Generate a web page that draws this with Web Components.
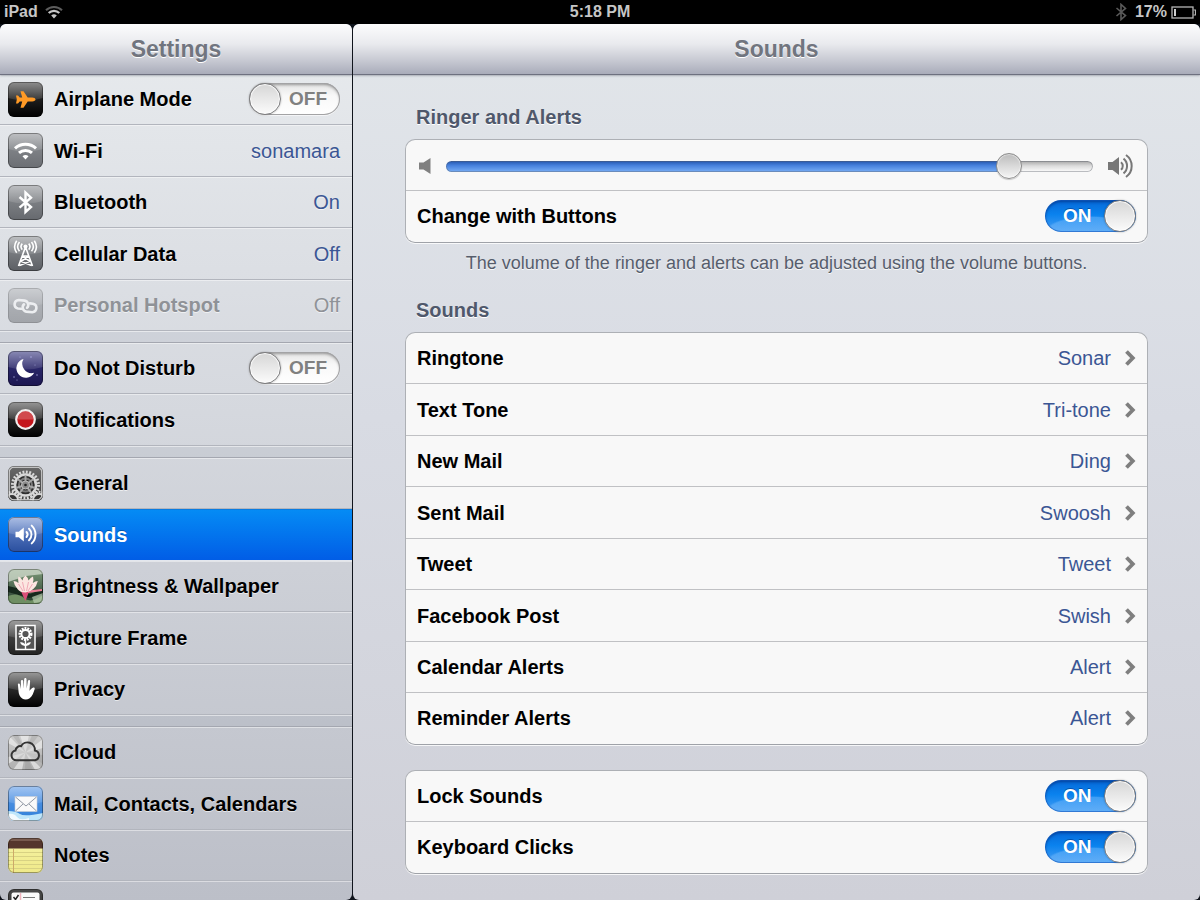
<!DOCTYPE html>
<html lang="en">
<head>
<meta charset="utf-8">
<title>Settings</title>
<style>
    html, body {
        height: 100%;
        margin: 0;
        overflow: hidden;
        background: #000;
    }
    body {
        font-family: "Liberation Sans", Arial, Helvetica, sans-serif;
        font-size: 20px;
    }
</style>
</head>
<body>
<settings-app>
    <status-bar slot="status"></status-bar>

    <settings-panel slot="sidebar" class="sidebar" heading="Settings">
        <plain-group>
            <switch-row icon="airplane">Airplane Mode</switch-row>
            <link-row icon="wifi" value="sonamara">Wi-Fi</link-row>
            <link-row icon="bluetooth" value="On">Bluetooth</link-row>
            <link-row icon="cellular" value="Off">Cellular Data</link-row>
            <link-row icon="hotspot" value="Off" disabled>Personal Hotspot</link-row>
        </plain-group>
        <plain-group>
            <switch-row icon="moon">Do Not Disturb</switch-row>
            <link-row icon="notifications">Notifications</link-row>
        </plain-group>
        <plain-group>
            <link-row icon="general">General</link-row>
            <link-row icon="sounds" selected>Sounds</link-row>
            <link-row icon="wallpaper">Brightness &amp; Wallpaper</link-row>
            <link-row icon="frame">Picture Frame</link-row>
            <link-row icon="privacy">Privacy</link-row>
        </plain-group>
        <plain-group>
            <link-row icon="icloud">iCloud</link-row>
            <link-row icon="mail">Mail, Contacts, Calendars</link-row>
            <link-row icon="notes">Notes</link-row>
            <link-row icon="reminders" name="Reminders"></link-row>
        </plain-group>
    </settings-panel>

    <settings-panel slot="detail" class="detail" heading="Sounds">
        <card-group heading="Ringer and Alerts" note="The volume of the ringer and alerts can be adjusted using the volume buttons.">
            <volume-row></volume-row>
            <switch-row on>Change with Buttons</switch-row>
        </card-group>
        <card-group heading="Sounds">
            <link-row value="Sonar" chevron>Ringtone</link-row>
            <link-row value="Tri-tone" chevron>Text Tone</link-row>
            <link-row value="Ding" chevron>New Mail</link-row>
            <link-row value="Swoosh" chevron>Sent Mail</link-row>
            <link-row value="Tweet" chevron>Tweet</link-row>
            <link-row value="Swish" chevron>Facebook Post</link-row>
            <link-row value="Alert" chevron>Calendar Alerts</link-row>
            <link-row value="Alert" chevron>Reminder Alerts</link-row>
        </card-group>
        <card-group>
            <switch-row on>Lock Sounds</switch-row>
            <switch-row on>Keyboard Clicks</switch-row>
        </card-group>
    </settings-panel>
</settings-app>

<script>
/* Page frame: status bar on top, sidebar and detail pane below */
class SettingsApp extends HTMLElement {
    connectedCallback() {
        this.attachShadow({ mode: "open" });
        this.shadowRoot.innerHTML = `
            <style>
                :host {
                    display: grid;
                    grid-template-rows: 24px minmax(0, 1fr);
                    height: 100vh;
                }
                main {
                    display: grid;
                    grid-template-columns: 352px minmax(0, 1fr);
                    gap: 1px;
                    min-height: 0;
                    background: #10141c;
                }
            </style>
            <slot name="status"></slot>
            <main>
                <slot name="sidebar"></slot>
                <slot name="detail"></slot>
            </main>
        `;
    }
}
customElements.define("settings-app", SettingsApp);


class StatusBar extends HTMLElement {
    connectedCallback() {
        this.attachShadow({ mode: "open" });
        this.shadowRoot.innerHTML = `
            <style>
                :host {
                    display: grid;
                    grid-template-columns: 1fr auto 1fr;
                    align-items: center;
                    padding: 0 4px;
                    background: #000;
                    color: #c6c6c6;
                    font-size: 16px;
                    font-weight: bold;
                }
                div {
                    display: flex;
                    align-items: center;
                    gap: 7px;
                }
                .right {
                    justify-content: flex-end;
                    gap: 4px;
                }
                .bt {
                    margin-right: 4px;
                }
                svg {
                    display: block;
                }
            </style>
            <div>
                <span>iPad</span>
                <svg width="18" height="14" viewBox="0 0 18 14" fill="none" stroke-width="2">
                    <path d="M1 5.200a11.300 11.300 0 0 1 16 0" stroke="#5c5c5c"/>
                    <path d="M3.700 8a7.500 7.500 0 0 1 10.600 0" stroke="#c6c6c6" stroke-width="2.300"/>
                    <path d="M6.200 10.600a4 4 0 0 1 5.600 0L9 13.600z" fill="#c6c6c6"/>
                </svg>
            </div>
            <span>5:18 PM</span>
            <div class="right">
                <svg class="bt" width="12" height="18" viewBox="0 0 12 18" fill="none" stroke="#5a5a5a" stroke-width="1.600">
                    <path d="M1.500 5l9 7.600L6 16.600V1.400l4.500 4L1.500 13"/>
                </svg>
                <span>17%</span>
                <svg width="25" height="13" viewBox="0 0 25 13">
                    <rect x="1" y="1" width="21" height="11" fill="none" stroke="#b4b4b4" stroke-width="1.300"/>
                    <rect x="3" y="3" width="2" height="7" fill="#d0d0d0"/>
                    <path d="M22.500 4h2v5h-2" fill="none" stroke="#b4b4b4" stroke-width="1.200"/>
                </svg>
            </div>
        `;
    }
}
customElements.define("status-bar", StatusBar);


/* A column with a glossy title bar; used for both sides */
class SettingsPanel extends HTMLElement {
    connectedCallback() {
        this.attachShadow({ mode: "open" });
        this.shadowRoot.innerHTML = `
            <style>
                :host {
                    display: flex;
                    flex-direction: column;
                    min-width: 0;
                    min-height: 0;
                    overflow: hidden;
                    border-radius: 6px;
                }
                :host(.sidebar) {
                    background: linear-gradient(#e8ebee, #d6d9df 42%, #bcbfc8);
                }
                :host(.detail) {
                    background: linear-gradient(#e2e6ea, #d8dbe3 45%, #cfd0d8);
                }
                header {
                    flex: none;
                    position: relative;
                    height: 50px;
                    background: linear-gradient(#fcfcfd, #e9eaee 40%, #c8cad3 72%, #a9acba);
                    border-radius: 6px 6px 0 0;
                    box-shadow: 0 1px #6e7180, 0 2px 2px rgba(90, 95, 110, .4);
                }
                h1 {
                    margin: 0;
                    font-size: 23px;
                    line-height: 50px;
                    text-align: center;
                    color: #71757f;
                    text-shadow: 0 1px #fff;
                }
                .content {
                    flex: 1;
                    display: flex;
                    flex-direction: column;
                    min-height: 0;
                    overflow: hidden;
                }
                :host(.detail) .content {
                    padding: 31px 52px 0;
                }
                :host(.sidebar) .content {
                    --label-shadow: 0 1px rgba(255, 255, 255, .6);
                    gap: 12px;
                }
            </style>
            <header><h1></h1></header>
            <div class="content"><slot></slot></div>
        `;
        this.shadowRoot.querySelector("h1").textContent = this.getAttribute("heading");
    }
}
customElements.define("settings-panel", SettingsPanel);


/* Full-width rows of the sidebar */
class PlainGroup extends HTMLElement {
    connectedCallback() {
        this.attachShadow({ mode: "open" });
        this.shadowRoot.innerHTML = `
            <style>
                :host {
                    display: block;
                    flex: none;
                    --line: #b2b5bd;
                    --highlight: rgba(255, 255, 255, .45);
                    --pad-left: 8px;
                    --pad-right: 12px;
                    box-shadow: 0 -1px #a4a7b0, 0 1px rgba(255, 255, 255, .5), 0 12px rgba(120, 125, 145, .1);
                }
                ::slotted(:nth-child(even)) {
                    --row-height: 52px;
                }
            </style>
            <slot></slot>
        `;
    }
}
customElements.define("plain-group", PlainGroup);


/* Rounded white card with an optional heading and footnote */
class CardGroup extends HTMLElement {
    connectedCallback() {
        this.attachShadow({ mode: "open" });
        this.shadowRoot.innerHTML = `
            <style>
                :host {
                    display: block;
                    flex: none;
                    margin-bottom: 25px;
                    --line: #c0c1c4;
                    --highlight: transparent;
                    --pad-left: 11px;
                    --pad-right: 11px;
                }
                :host([note]) {
                    margin-bottom: 24px;
                }
                h2 {
                    margin: 0 0 10px;
                    padding-left: 11px;
                    font-size: 20px;
                    line-height: 24px;
                    color: #4f586b;
                    text-shadow: 0 1px #fff;
                }
                .card {
                    border: 1px solid #adb0b5;
                    border-bottom-color: #9fa2a8;
                    border-radius: 10px;
                    overflow: hidden;
                    background: #f8f8f8;
                    box-shadow: 0 1px rgba(255, 255, 255, .8);
                }
                ::slotted(:nth-child(even)) {
                    --row-height: 52px;
                }
                ::slotted(:last-child) {
                    --row-height: 51px;
                    --line: transparent;
                }
                p {
                    margin: 9px 0 0;
                    font-size: 18px;
                    line-height: 22px;
                    text-align: center;
                    color: #565d6c;
                    text-shadow: 0 1px rgba(255, 255, 255, .8);
                }
                [hidden] {
                    display: none;
                }
            </style>
            <h2></h2>
            <div class="card"><slot></slot></div>
            <p></p>
        `;
        this._fill("h2", "heading");
        this._fill("p", "note");
    }

    _fill(selector, name) {
        const node = this.shadowRoot.querySelector(selector);
        node.textContent = this.getAttribute(name) || "";
        node.hidden = !this.hasAttribute(name);
    }
}
customElements.define("card-group", CardGroup);


/* Styles that every row has */
const rowStyle = `
    :host {
        display: block;
    }
    .row {
        box-sizing: border-box;
        display: flex;
        align-items: center;
        height: var(--row-height, 51px);
        padding: 0 var(--pad-right) 0 var(--pad-left);
        border-bottom: 1px solid var(--line);
        box-shadow: inset 0 1px var(--highlight);
        color: #000;
        text-decoration: none;
    }
    .text {
        flex: 1;
        font-weight: bold;
        line-height: 24px;
        text-shadow: var(--label-shadow, none);
        white-space: nowrap;
    }
    app-icon {
        margin-right: 11px;
    }
`;

class LinkRow extends HTMLElement {
    connectedCallback() {
        const icon = this.getAttribute("icon");
        const value = this.getAttribute("value");
        const name = this.getAttribute("name");

        this.attachShadow({ mode: "open" });
        this.shadowRoot.innerHTML = `
            <style>
                ${rowStyle}
                .value {
                    line-height: 24px;
                    color: #3b5694;
                    text-shadow: var(--label-shadow, none);
                }
                svg {
                    margin-left: 13px;
                }
                :host([selected]) .row {
                    background: linear-gradient(#058cf5, #015de6);
                    border-color: #e3e7ee;
                    box-shadow: inset 0 1px #0a7be0;
                    color: #fff;
                }
                :host([selected]) .text {
                    text-shadow: 0 -1px rgba(0, 0, 0, .3);
                }
                :host([disabled]) .text,
                :host([disabled]) .value {
                    color: #8f9297;
                }
                :host([disabled]) app-icon {
                    opacity: .5;
                }
            </style>
            <a class="row" href="#" ${name ? `aria-label="${name}"` : ""}>
                ${icon ? `<app-icon name="${icon}"></app-icon>` : ""}
                <span class="text"><slot></slot></span>
                ${value ? `<span class="value">${value}</span>` : ""}
                ${this.hasAttribute("chevron") ? `
                    <svg width="12" height="18" viewBox="0 0 12 18" fill="none" stroke="#7f7f7f" stroke-width="3.800">
                        <path d="M2.500 2.500L8.800 9l-6.300 6.500"/>
                    </svg>` : ""}
            </a>
        `;
    }
}
customElements.define("link-row", LinkRow);


class SwitchRow extends HTMLElement {
    connectedCallback() {
        const icon = this.getAttribute("icon");

        this.attachShadow({ mode: "open" });
        this.shadowRoot.innerHTML = `
            <style>
                ${rowStyle}
                .switch {
                    display: grid;
                    align-items: center;
                    width: 91px;
                    height: 32px;
                }
                .switch > * {
                    grid-area: 1 / 1;
                }
                input {
                    appearance: none;
                    box-sizing: border-box;
                    display: flex;
                    width: 100%;
                    height: 100%;
                    margin: 0;
                    border-radius: 16px;
                    background: linear-gradient(#e4e4e4, #f8f8f8 40%, #fff);
                    box-shadow: inset 0 0 0 1px #a3a3a5, inset 0 2px 3px rgba(0, 0, 0, .35), 0 1px rgba(255, 255, 255, .6);
                }
                input::before {
                    content: "";
                    box-sizing: border-box;
                    width: 32px;
                    height: 32px;
                    border: 1px solid #7c7c7e;
                    border-radius: 50%;
                    background: linear-gradient(#d6d6d6, #fbfbfb);
                    box-shadow: inset 0 0 1px 1px #fff, 0 0 2px rgba(0, 0, 0, .3);
                }
                input:checked {
                    justify-content: flex-end;
                    background:
                        radial-gradient(ellipse 46px 16px at 50% 100%, rgba(130, 195, 255, .4) 92%, transparent),
                        linear-gradient(#0568d8, #0a82ee 45%, #4a9ff2);
                    box-shadow: inset 0 0 0 1px rgba(20, 90, 190, .6), inset 0 2px 3px rgba(0, 30, 100, .55);
                }
                .word {
                    padding-left: 40px;
                    font-size: 19px;
                    font-weight: bold;
                    line-height: 32px;
                    color: #808080;
                    pointer-events: none;
                }
                :checked + .word {
                    padding-left: 18px;
                    color: #fff;
                    text-shadow: 0 -1px rgba(0, 40, 110, .5);
                }
            </style>
            <label class="row">
                ${icon ? `<app-icon name="${icon}"></app-icon>` : ""}
                <span class="text"><slot></slot></span>
                <span class="switch">
                    <input type="checkbox" role="switch">
                    <span class="word"></span>
                </span>
            </label>
        `;

        this.input = this.shadowRoot.querySelector("input");
        this.input.checked = this.hasAttribute("on");
        this.input.addEventListener("change", () => this._update());
        this._update();
    }

    _update() {
        this.shadowRoot.querySelector(".word").textContent = this.input.checked ? "ON" : "OFF";
    }
}
customElements.define("switch-row", SwitchRow);


class VolumeRow extends HTMLElement {
    connectedCallback() {
        this.attachShadow({ mode: "open" });
        this.shadowRoot.innerHTML = `
            <style>
                ${rowStyle}
                .row {
                    gap: 14px;
                    padding: 2px 12px 0 13px;
                }
                svg {
                    flex: none;
                }
                input {
                    appearance: none;
                    flex: 1;
                    min-width: 0;
                    height: 28px;
                    margin: 0;
                    background: none;
                }
                input::-webkit-slider-runnable-track {
                    height: 11px;
                    border-radius: 6px;
                    background:
                        linear-gradient(#2456ac, #4680dc 40%, #79aef5) 0 0 / var(--level) 100% no-repeat,
                        linear-gradient(#a6a6a6, #dcdcdc 45%, #fdfdfd);
                    box-shadow: inset 0 0 0 1px rgba(90, 95, 105, .4);
                }
                input::-webkit-slider-thumb {
                    appearance: none;
                    box-sizing: border-box;
                    width: 26px;
                    height: 26px;
                    margin-top: -8px;
                    border: 1px solid #8c8c8c;
                    border-radius: 50%;
                    background: linear-gradient(#bcbcbc, #f6f6f6);
                    box-shadow: inset 0 0 1px 1px rgba(255, 255, 255, .5), 0 1px 1px rgba(0, 0, 0, .2);
                }
            </style>
            <div class="row">
                <svg width="13" height="18" viewBox="0 0 13 18" fill="#808080">
                    <path d="M0 5.500h4.500L11.500 1v16l-7-4.500H0z"/>
                </svg>
                <input type="range" min="0" max="200" value="177" aria-label="Ringer volume">
                <svg width="28" height="26" viewBox="0 0 28 26" fill="none" stroke="#777" stroke-width="2">
                    <path d="M1 9h4.500L12 4v18L5.500 17H1z" fill="#777" stroke="none"/>
                    <path d="M14 9.200a5 5 0 0 1 0 7.600M16.500 5.600a9.500 9.500 0 0 1 0 14.800M19 2a13.500 13.500 0 0 1 0 22"/>
                </svg>
            </div>
        `;

        this.input = this.shadowRoot.querySelector("input");
        this.input.addEventListener("input", () => this._update());
        this._update();
    }

    _update() {
        this.input.style.setProperty("--level", this.input.value / this.input.max * 100 + "%");
    }
}
customElements.define("volume-row", VolumeRow);


/*
 * Icons: each one has the two colours of its background gradient
 * and the drawing that goes on it, in a 35 x 35 box.
 * gloss: false leaves out the light upper half.
 */
const icons = {
    airplane: {
        from: "#3c3c3c", to: "#000",
        art: `<path fill="#ff9a26" d="M27.500 17.500c0 1.100-1.300 1.900-3.200 1.900h-4.600l-4.200 6.400h-3l1.700-6.400h-2.500L10 21.500H8l.8-4-.8-4h2l1.700 2.100h2.500l-1.700-6.400h3l4.200 6.400h4.600c1.900 0 3.200.8 3.200 1.900z"/>`
    },
    wifi: {
        from: "#8f9296", to: "#6b6e73",
        art: `<g fill="none" stroke="#fff" stroke-width="3">
                <path d="M7 15.300a15.500 15.500 0 0 1 21 0M11 19.900a9.700 9.700 0 0 1 13 0"/></g>
              <path fill="#fff" d="M14.500 23.200a5 5 0 0 1 6 0l-3 3.200z"/>`
    },
    bluetooth: {
        from: "#8f9296", to: "#66696e",
        art: `<path fill="none" stroke="#fff" stroke-width="2.400" d="M11.500 12l11.500 10-5.500 5V7.500l5.500 5.200-11.500 10"/>`
    },
    cellular: {
        from: "#8f9296", to: "#5c5f64",
        art: `<g fill="none" stroke="#fff" stroke-width="1.600">
                <path d="M17.500 11L10.500 30M17.500 11l7 19M14.500 20h6M13 25.500l7.500-5.500M22 25.500L14.500 20M11.500 29.500l10-4M23.500 29.500l-10-4"/>
                <path d="M14.300 7.600a4.500 4.500 0 0 0 0 6M20.700 7.600a4.500 4.500 0 0 1 0 6M11.500 6a7.500 7.500 0 0 0 0 9.300M23.500 6a7.500 7.500 0 0 1 0 9.300M8.700 4.700a10.500 10.500 0 0 0 0 12M26.300 4.700a10.500 10.500 0 0 1 0 12"/></g>
              <circle cx="17.500" cy="10.500" r="2" fill="#fff"/>`
    },
    hotspot: {
        from: "#8f9296", to: "#6b6e73",
        art: `<g fill="none" stroke="#fff" stroke-width="2.600" stroke-linecap="round">
                <path d="M13 20.800l-3-.3a4.300 4.300 0 0 1 .7-8.500l6 .6a4.300 4.300 0 0 1 2.300 7.300"/>
                <path d="M22 15.400l3 .3a4.300 4.300 0 0 1-.7 8.500l-6-.6a4.300 4.300 0 0 1-2.300-7.300"/></g>`
    },
    moon: {
        from: "#35357e", to: "#1c1650",
        art: `<path fill="#fff" d="M15.500 8a9.500 9.500 0 1 0 10.700 13.800A9.500 9.500 0 0 1 15.500 8z"/>
              <g fill="#a9a9e0"><circle cx="23" cy="6" r=".8"/><circle cx="12" cy="6" r=".6"/><circle cx="29" cy="24" r=".7"/>
                <circle cx="6" cy="26" r=".7"/><circle cx="27" cy="14" r=".5"/><circle cx="9" cy="29" r=".5"/></g>`
    },
    notifications: {
        from: "#4a4a4a", to: "#000",
        art: `<circle cx="17.500" cy="17.500" r="9.300" fill="#c4161c" stroke="#f2eeee" stroke-width="2.200"/>
              <path fill="#fff" opacity=".22" d="M9.500 17.500a8 8 0 0 1 16 0z"/>`
    },
    general: {
        from: "#6a6a6a", to: "#3c3c3c", gloss: false,
        art: `<g fill="none" stroke="#d8d8d8">
                <circle cx="4" cy="34" r="6" fill="#333" stroke-width="2"/>
                <circle cx="4" cy="34" r="8" stroke-width="2.500" stroke-dasharray="1.700 1.400"/>
                <circle cx="31" cy="34" r="6" fill="#333" stroke-width="2"/>
                <circle cx="31" cy="34" r="8" stroke-width="2.500" stroke-dasharray="1.700 1.400"/>
                <circle cx="17.500" cy="19" r="13" stroke-width="3" stroke-dasharray="1.900 1.500"/>
                <circle cx="17.500" cy="19" r="10.500" fill="#2e2e2e" stroke-width="2.500"/>
                <circle cx="17.500" cy="19" r="6.500" stroke="#7a7a7a" stroke-width="2"/>
                <path stroke="#a8a8a8" stroke-width="2" d="M17.500 19V9M17.500 19l9.500 3M17.500 19l5.800 8M17.500 19l-5.800 8M17.500 19L8 22M17.500 19l8-6M17.500 19l-8-6"/></g>
              <circle cx="17.500" cy="19" r="4" fill="#8c8c8c" stroke="#bdbdbd"/>
              <circle cx="17.500" cy="19" r="1.300" fill="#222"/>
              <rect x="1" y="1" width="33" height="33" rx="5" fill="none" stroke="#dedede" stroke-width="1.500"/>`
    },
    sounds: {
        from: "#6f8fd0", to: "#2a4f9f",
        art: `<path fill="#fff" d="M7.500 14.700h3.300l5-4.200v14l-5-4.200H7.500z"/>
              <path fill="none" stroke="#fff" stroke-width="1.900" stroke-linecap="round" d="M18.500 15a3.700 3.700 0 0 1 0 5M21 11.700a8 8 0 0 1 0 11.600M23.700 8.600a12.300 12.300 0 0 1 0 17.800"/>`
    },
    wallpaper: {
        from: "#7f9c7b", to: "#22392a", gloss: false,
        art: `<path fill="#d3dccf" opacity=".75" d="M0 0h35v5L18 7 0 13z"/>
              <path fill="#17291d" d="M0 17l13 3 9 5 13-5v6l-14 3L0 23z"/>
              <path fill="#6f8f63" d="M0 27q9-4 16 2t19-3v9H0z"/>
              <path fill="#b9cdb0" opacity=".7" d="M24 28l11-4v9l-9 1z"/>
              <path fill="#d94f78" d="M12 20h10l-3 8-1.500 4-2-4z"/>
              <path fill="#ee7f98" d="M20 21.500l14-1.500v2l-14 2z"/>
              <path fill="#fce6e1" d="M17.500 6.500q2.500 2 3 5 2-3 4.500-4 1 3-.2 6.500 2.500-2 5-2-1 5-4.500 8-3 3-7.800 3.500Q12 23.500 9.500 20 6 16 5.500 12q3 .2 5 2-1-4 0-6.500 2.500 1 4 4 .5-3 3-5z"/>
              <path fill="none" stroke="#f0a9b6" d="M14.500 13l2 9M20.500 13l-2 9M10.500 15l4.500 7M24.500 15L20 22"/>`
    },
    frame: {
        from: "#585858", to: "#222",
        art: `<rect x="8" y="5.500" width="19" height="24" fill="#555" stroke="#fff" stroke-width="1.500"/>
              <circle cx="17.500" cy="14" r="5.500" fill="none" stroke="#fff" stroke-width="3" stroke-dasharray="1.800 .900"/>
              <circle cx="17.500" cy="14" r="4" fill="none" stroke="#fff" stroke-width="1.800"/>
              <path fill="#fff" d="M16.800 19h1.400v5q2-2.500 5-1.500-1.500 3-5 3.500v3h-1.400v-3q-3.500-.5-5-3.500 3-1 5 1.500z"/>`
    },
    privacy: {
        from: "#505050", to: "#000",
        art: `<path fill="#fff" d="M14.200 26.500c-2.500-2-3.500-4.500-3.700-7.500l-.6-6.500c0-1.400 1.900-1.500 2.100 0l.8 4.500.1-8c.1-1.500 2.200-1.500 2.300 0l.4 7.500.6-9.500c.1-1.500 2.200-1.500 2.300 0l.2 9.600 1.200-7.700c.3-1.400 2.400-1.200 2.200.3l-.6 9.500c1.200-1.200 2-2.500 3.300-3 1-.4 2.200.2 1.900 1.200-1.200 4-2.400 7.300-5.400 9.600-2 1.400-5.200 1.400-7.100 0z"/>`
    },
    icloud: {
        from: "#cdcdcd", to: "#b0b0b0", gloss: false,
        art: `<path fill="#f3f3f3" opacity=".6" d="M17.500 17.500L0 0v8zM17.500 17.500L12 0h9zM17.500 17.500L35 4v9zM17.500 17.500L35 35h-8zM17.500 17.500L14 35h-9zM17.500 17.500L0 22v7z"/>
              <path fill="#8e8e8e" opacity=".3" d="M17.500 17.500L4 0h6zM17.500 17.500L24 0h7zM17.500 17.500L35 20v9zM17.500 17.500L17 35h8z"/>
              <path fill="#d5d5d5" fill-opacity=".5" stroke="#333" stroke-width="2" d="M8.500 25.300a5 5 0 0 1-1-9.900 4.800 4.800 0 0 1 5.600-4.200 7.400 7.400 0 0 1 13.800 4.300 5 5 0 0 1 .1 9.800z"/>`
    },
    mail: {
        from: "#5f9be8", to: "#2f7fd8",
        art: `<path fill="#bfe6fa" d="M0 25q8 0 12 3t23-1v8H0z"/>
              <path fill="#fff" opacity=".8" d="M0 28q6-1 9 3t12 1v3H0z"/>
              <rect x="7" y="10.500" width="22" height="15" fill="#fafafa" stroke="#c9ced6" stroke-width=".6"/>
              <path fill="none" stroke="#9098a4" d="M7.500 11l10.500 9 10.500-9M7.500 25l7.500-7M28.500 25L21 18"/>`
    },
    notes: {
        from: "#f6f3a3", to: "#efe98a", gloss: false,
        art: `<path fill="#55362c" d="M0 0h35v10.500H0z"/>
              <path fill="#785a4e" d="M0 0h35v3H0z"/>
              <path stroke="#d8d283" d="M0 14.500h35M0 18.500h35M0 22.500h35M0 26.500h35M0 30.500h35"/>
              <path stroke="#cda968" d="M5.500 11v24"/>`
    },
    reminders: {
        from: "#4a4a4a", to: "#222", gloss: false,
        art: `<rect x="3.500" y="3.500" width="28" height="30" rx="2" fill="#fafafa"/>
              <path stroke="#efb2bb" stroke-width="1.500" d="M12.500 4v30"/>
              <path fill="none" stroke="#222" stroke-width="1.500" d="M5.500 8l2 2.500L10.500 6"/>
              <path stroke="#777" stroke-width="1.200" d="M15 8.500h12"/>
              <path stroke="#bbb" d="M4 13.500h27"/>`
    }
};

class AppIcon extends HTMLElement {
    connectedCallback() {
        const icon = icons[this.getAttribute("name")];

        this.attachShadow({ mode: "open" });
        this.shadowRoot.innerHTML = `
            <style>
                :host {
                    display: block;
                    flex: none;
                    width: 35px;
                    height: 35px;
                }
                svg {
                    display: block;
                    border-radius: 6px;
                    overflow: hidden;
                }
            </style>
            <svg width="35" height="35" viewBox="0 0 35 35" aria-hidden="true">
                <defs>
                    <linearGradient id="back" x2="0" y2="1">
                        <stop stop-color="${icon.from}"/>
                        <stop offset="1" stop-color="${icon.to}"/>
                    </linearGradient>
                    <linearGradient id="gloss" x2="0" y2="1">
                        <stop stop-color="#fff" stop-opacity=".42"/>
                        <stop offset="1" stop-color="#fff" stop-opacity=".1"/>
                    </linearGradient>
                </defs>
                <rect width="35" height="35" fill="url(#back)"/>
                ${icon.gloss === false ? "" : `<path fill="url(#gloss)" d="M0 0h35v16q-17.500 5-35 0z"/>`}
                ${icon.art}
                <rect x=".5" y=".5" width="34" height="34" rx="5.500" fill="none" stroke="#000" stroke-opacity=".35"/>
            </svg>
        `;
    }
}
customElements.define("app-icon", AppIcon);
</script>
</body>
</html>
